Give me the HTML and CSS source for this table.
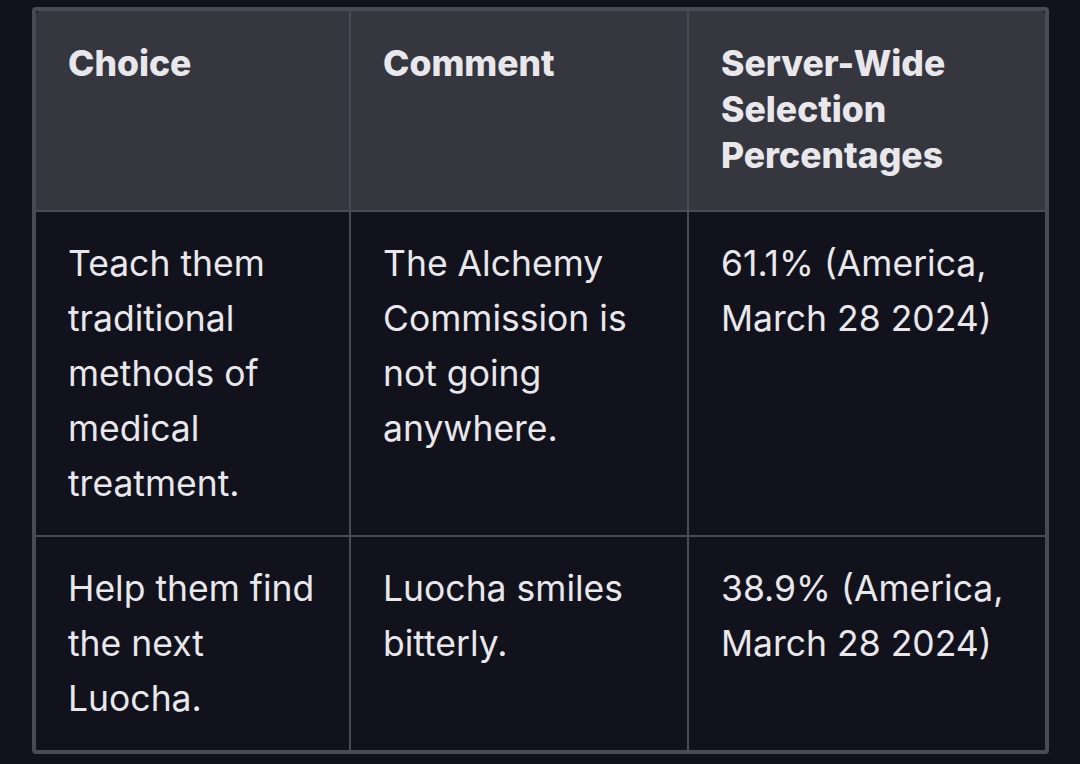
FILE: index.html
```html
<!DOCTYPE html>
<html lang="en">
<head>
<meta charset="utf-8">
<title>Choices</title>
<link rel="stylesheet" href="styles.css">
</head>
<body>
<div class="frame">
  <table class="choices">
    <colgroup>
      <col class="c1">
      <col class="c2">
      <col class="c3">
    </colgroup>
    <thead>
      <tr>
        <th>Choice</th>
        <th>Comment</th>
        <th class="last">Server-Wide Selection Percentages</th>
      </tr>
    </thead>
    <tbody>
      <tr>
        <td>Teach them traditional methods of medical treatment.</td>
        <td>The Alchemy Commission is not going anywhere.</td>
        <td class="last">61.1% (America, March 28 2024)</td>
      </tr>
      <tr class="final">
        <td>Help them find the next Luocha.</td>
        <td>Luocha smiles bitterly.</td>
        <td class="last">38.9% (America, March 28 2024)</td>
      </tr>
    </tbody>
  </table>
</div>
</body>
</html>
```

FILE: styles.css
```css
html, body {
  margin: 0;
  padding: 0;
  background: #12121c;
}
body {
  padding: 7px 0 0 32px;
  font-family: Inter, "Noto Sans", sans-serif;
  color: #e8e8ec;
}
.frame {
  width: 1009px;
  border: 4px solid #4a4a55;
  border-radius: 4px;
  background: #12121c;
}
.choices {
  width: 1009px;
  table-layout: fixed;
  border-collapse: separate;
  border-spacing: 0;
}
.c1 { width: 315px; }
.c2 { width: 338px; }
.c3 { width: 356px; }
th, td {
  text-align: left;
  vertical-align: top;
  padding: 24px 28px 24px 32px;
  border-right: 2px solid #4a4a55;
  border-bottom: 2px solid #4a4a55;
}
th.last, td.last { border-right: 0; }
.final td { border-bottom: 0; }
th {
  background: #36363f;
  font-weight: 800;
  font-size: 35.5px;
  line-height: 46px;
  padding-top: 30px;
  padding-bottom: 31px;
}
thead th:first-child { border-top-left-radius: 4px; }
thead th.last { border-top-right-radius: 4px; }
td {
  font-weight: 400;
  font-size: 35.5px;
  line-height: 55px;
}
```
